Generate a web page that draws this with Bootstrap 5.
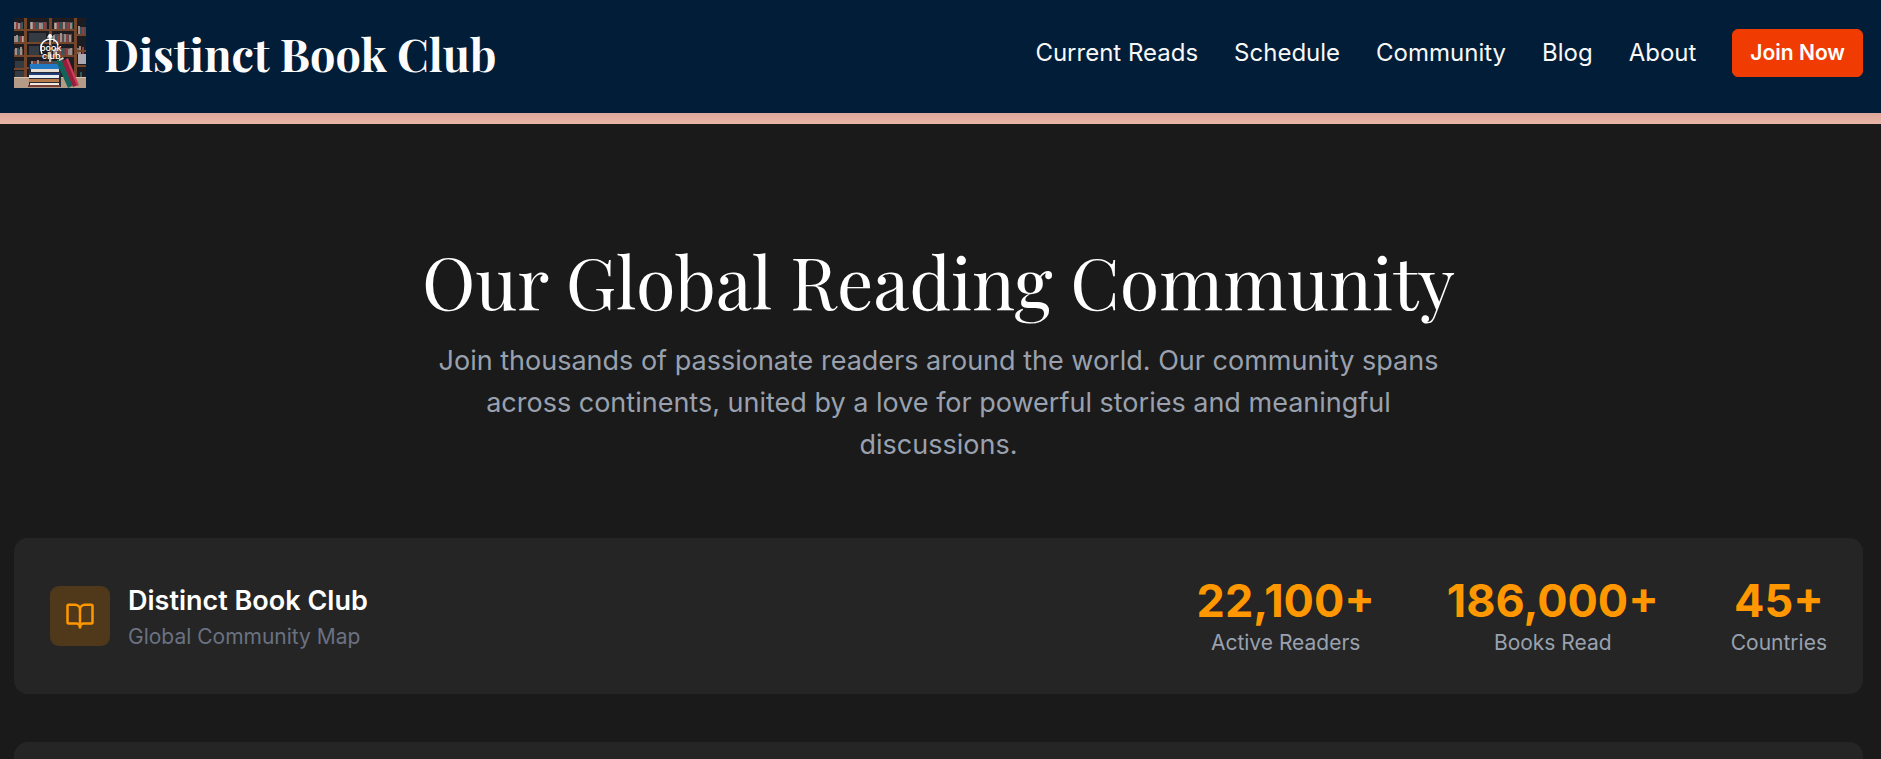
<!DOCTYPE html>
<html lang="en">
<head>
<meta charset="utf-8">
<meta name="viewport" content="width=device-width, initial-scale=1">
<title>Distinct Book Club</title>
<link href="https://cdn.jsdelivr.net/npm/bootstrap@5.3.0/dist/css/bootstrap.min.css" rel="stylesheet">
<style>
  :root { --ink: #1a1a1a; --panel: #252525; --navy: #021d37; --amber: #ff9800; --muted: #99a1af; }
  body { background: var(--ink); color: #fff; font-family: Inter, "Liberation Sans", sans-serif; overflow-x: hidden; }
  .page-gutter { padding-left: 14px; padding-right: 18px; }
  .site-header { background: var(--navy); padding-top: 18px; padding-bottom: 18px; min-height: 113px; }
  .site-header .navbar-brand { gap: 18px; padding: 0; margin: 0; color: #fcfcfc; }
  .brand-name { font-family: "Playfair Display", "Liberation Serif", serif; font-weight: 700; font-size: 45px; line-height: 70px; }
  .main-links { gap: 36px; }
  .header-actions { padding-top: 11px; }
  .site-header .main-links .nav-link { padding: 0; color: #f8f8f8; font-size: 24px; line-height: 36px; }
  .btn-join { --bs-btn-color: #fff; --bs-btn-bg: #f03c02; --bs-btn-border-color: #f03c02; --bs-btn-hover-color: #fff; --bs-btn-hover-bg: #d83602; --bs-btn-hover-border-color: #d83602; --bs-btn-padding-x: 17px; --bs-btn-padding-y: 8px; --bs-btn-border-radius: 6px; font-size: 21px; line-height: 30px; font-weight: 600; }
  .accent-strip { height: 11px; background: linear-gradient(#dfa79b, #e9b6a7); }
  .hero { padding-top: 108px; padding-bottom: 72px; }
  .hero-title { font-family: "Playfair Display", "Liberation Serif", serif; font-weight: 400; font-size: 72px; line-height: 96px; margin: 0 0 12px; }
  .hero-text { max-width: 1008px; font-size: 27px; line-height: 42px; color: var(--muted); }
  .panel { background: var(--panel); border-radius: 14px; padding: 36px; }
  .panel-gap { margin-top: 48px; }
  .club { gap: 18px; }
  .club-icon { width: 60px; height: 60px; border-radius: 9px; background: #50391b; color: var(--amber); }
  .club-text { padding-top: 6px; }
  .club-name { font-size: 27px; line-height: 36px; font-weight: 600; margin: 0; }
  .club-note { font-size: 21px; line-height: 36px; color: #6a7282; }
  .stats { gap: 72px; }
  .stat-value { font-size: 45px; line-height: 54px; font-weight: 700; color: var(--amber); }
  .stat-label { font-size: 21px; line-height: 30px; color: var(--muted); }
</style>
</head>
<body>
<header>
  <nav class="navbar navbar-expand-lg site-header page-gutter align-items-start">
    <a class="navbar-brand d-flex align-items-start" href="#">
      <svg width="72" height="70" viewBox="0 0 72 70" aria-hidden="true">
        <rect width="72" height="70" fill="#2a1a16"/>
        <g fill="#1c1d22"><rect y="1" width="10" height="57"/><rect x="13" y="1" width="22" height="57"/><rect x="38" y="1" width="22" height="57"/><rect x="63" y="1" width="9" height="57"/></g>
        <path fill="#5b4a4c" d="M0 5h9v6H0zM16 4h17v7H16zM40 4h19v7H40zM64 9h8v7h-8zM0 18h10v6H0zM40 16h18v8H40zM0 31h9v6H0zM40 30h19v7H40zM17 43h26v6H17z"/>
        <g stroke-width="2" fill="none">
          <path stroke="#a08f8a" d="M1 4v7M5 5v6M18 4v7M26 5v6M41 5v6M50 4v7M65 8v8M3 17v7M8 18v6M40 17v7M47 15v9M56 17v7M2 30v7M7 29v8M42 30v7M57 30v7M66 28v8M24 42v7M44 42v7"/>
          <path stroke="#8f3e42" d="M3 4v7M20 5v6M31 4v7M44 4v7M54 5v6M69 9v7M7 18v6M44 18v6M53 16v8M46 29v8M53 30v7M69 29v7M21 43v6M47 43v6"/>
          <path stroke="#31585a" d="M8 4v7M23 4v7M29 5v6M47 5v6M58 4v7M67 9v7M5 18v6M42 17v7M50 17v7M4 30v7M49 30v7M40 43v6M67 54v7"/>
          <path stroke="#d3c6ba" stroke-width="1" d="M17 4v7M28 5v6M42 5v6M57 5v6M1 18v6M51 16v8M9 18v6M40 31v6M55 31v6M18 43v6M64 30v6"/>
        </g>
        <path fill="#343b42" d="M15 15h17v9H15zM15 28h10v9H15zM1 43h9v7H1zM1 53h9v6H1z"/>
        <path fill="#aaa8b0" d="M64 36h8v10h-8z"/>
        <g fill="#76462a"><path d="M10 0h3v60h-3zM35 0h3v58h-3zM60 0h3v60h-3z"/><path d="M0 11h10v2H0zM13 11h47v2H13zM0 24h10v2H0zM13 24h47v2H13zM0 37h10v2H0zM13 37h47v2H13zM0 50h10v2H0zM13 49h32v2H13zM63 16h9v2h-9zM63 32h9v2h-9zM63 47h9v2h-9z"/></g>
        <path fill="#b49b88" d="M0 59h72v11H0z"/><path fill="#d4c2ad" d="M0 59h72v1H0z"/>
        <path fill="#252a35" d="M15 46h32v23H15z"/>
        <path fill="#2479c4" d="M16 46h29l1 5H16z"/><path fill="#e4ded5" d="M17 51h28v3H17z"/>
        <path fill="#213d7c" d="M15 55h31v3H15z"/><path fill="#e8edf1" d="M15 57h30v3H15z"/>
        <path fill="#b77b4b" d="M15 61h30v3H15z"/><path fill="#f1e8db" d="M16 65h29v2H16z"/><path fill="#763e37" d="M14 67h32v2H14z"/>
        <path fill="#12645b" d="M42 43l6-2 12 26-6 3z"/><path fill="#d7cfc2" d="M45 41l4-2 1 2-5 2z"/>
        <path fill="#981d3b" d="M48 43l5-2 11 26-5 2z"/><path fill="#cc3e58" d="M52 41l2-1 11 27-2 1z"/>
        <path d="M28 36c-3-8 0-14 8-15 4 0 7 2 8 6" fill="none" stroke="#fff" stroke-width="1.4"/>
        <path d="M36 18v9M33 19h6M36 34v10" stroke="#fff" stroke-width="1.2"/><circle cx="36" cy="18" r="2" fill="#fff"/>
        <text x="26" y="33" fill="#fff" font-family="Inter, sans-serif" font-size="9" font-weight="500">book</text>
        <text x="28" y="41" fill="#fff" font-family="Inter, sans-serif" font-size="9" font-weight="500">club</text>
      </svg>
      <span class="brand-name">Distinct Book Club</span>
    </a>
    <div class="main-links header-actions d-flex align-items-center ms-auto">
      <ul class="navbar-nav flex-row main-links">
        <li class="nav-item"><a class="nav-link" href="#">Current Reads</a></li>
        <li class="nav-item"><a class="nav-link" href="#">Schedule</a></li>
        <li class="nav-item"><a class="nav-link" href="#">Community</a></li>
        <li class="nav-item"><a class="nav-link" href="#">Blog</a></li>
        <li class="nav-item"><a class="nav-link" href="#">About</a></li>
      </ul>
      <button type="button" class="btn btn-join">Join Now</button>
    </div>
  </nav>
  <div class="accent-strip"></div>
</header>
<main class="page-gutter">
  <section class="hero text-center">
    <h1 class="hero-title">Our Global Reading Community</h1>
    <p class="hero-text mx-auto mb-0">Join thousands of passionate readers around the world. Our community spans across continents, united by a love for powerful stories and meaningful discussions.</p>
  </section>
  <section class="panel d-flex flex-wrap align-items-center justify-content-between">
    <div class="club d-flex align-items-center">
      <div class="club-icon d-flex align-items-center justify-content-center flex-shrink-0">
        <svg width="30" height="30" viewBox="0 0 24 24" fill="none" stroke="currentColor" stroke-width="2" stroke-linecap="round" stroke-linejoin="round" aria-hidden="true"><path d="M12 7v14"/><path d="M3 18a1 1 0 0 1-1-1V4a1 1 0 0 1 1-1h5a4 4 0 0 1 4 4 4 4 0 0 1 4-4h5a1 1 0 0 1 1 1v13a1 1 0 0 1-1 1h-6a3 3 0 0 0-3 3 3 3 0 0 0-3-3z"/></svg>
      </div>
      <div class="club-text">
        <h2 class="club-name">Distinct Book Club</h2>
        <div class="club-note">Global Community Map</div>
      </div>
    </div>
    <div class="stats d-flex text-center">
      <div><div class="stat-value">22,100+</div><div class="stat-label">Active Readers</div></div>
      <div><div class="stat-value">186,000+</div><div class="stat-label">Books Read</div></div>
      <div><div class="stat-value">45+</div><div class="stat-label">Countries</div></div>
    </div>
  </section>
  <section class="panel panel-gap"></section>
</main>
<script src="https://cdn.jsdelivr.net/npm/bootstrap@5.3.0/dist/js/bootstrap.bundle.min.js"></script>
</body>
</html>
